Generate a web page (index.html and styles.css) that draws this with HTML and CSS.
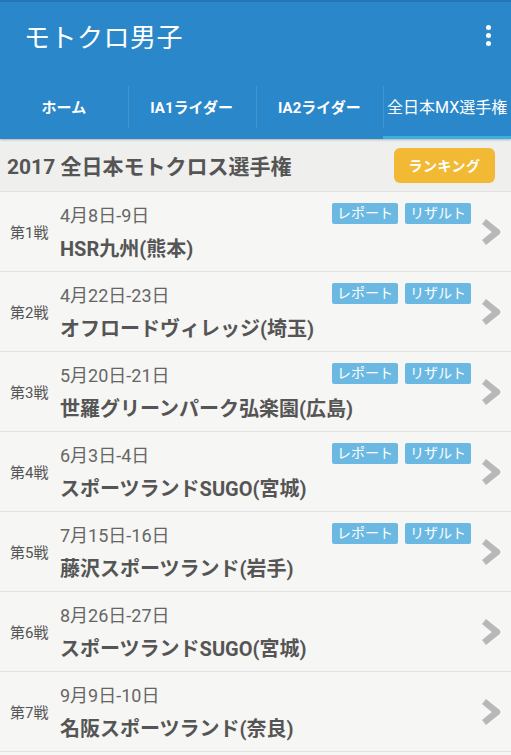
FILE: index.html
```html
<!DOCTYPE html>
<html lang="ja">
<head>
<meta charset="UTF-8">
<meta name="viewport" content="width=device-width, initial-scale=1.0">
<title>モトクロ男子</title>
<link rel="stylesheet" href="styles.css">
</head>
<body>
    <div class="app-header">
        <div class="toolbar">
            <h1 class="app-title">モトクロ男子</h1>
            <span class="menu-btn"><i></i><i></i><i></i></span>
        </div>
        <div class="tabs">
            <div class="tab">ホーム</div>
            <div class="tab">IA1ライダー</div>
            <div class="tab">IA2ライダー</div>
            <div class="tab active">全日本MX選手権</div>
        </div>
    </div>

    <div class="section-head">
        <h2>2017 全日本モトクロス選手権</h2>
        <span class="ranking-btn">ランキング</span>
    </div>

    <div class="race-list" id="raceList"></div>

    <script>
        const races = [
            { round: '第1戦', date: '4月8日-9日', place: 'HSR九州(熊本)', done: true },
            { round: '第2戦', date: '4月22日-23日', place: 'オフロードヴィレッジ(埼玉)', done: true },
            { round: '第3戦', date: '5月20日-21日', place: '世羅グリーンパーク弘楽園(広島)', done: true },
            { round: '第4戦', date: '6月3日-4日', place: 'スポーツランドSUGO(宮城)', done: true },
            { round: '第5戦', date: '7月15日-16日', place: '藤沢スポーツランド(岩手)', done: true },
            { round: '第6戦', date: '8月26日-27日', place: 'スポーツランドSUGO(宮城)', done: false },
            { round: '第7戦', date: '9月9日-10日', place: '名阪スポーツランド(奈良)', done: false }
        ];

        const list = document.getElementById('raceList');

        races.forEach(race => {
            const row = document.createElement('div');
            row.classList.add('race-row');

            const badges = race.done
                ? '<span class="badge">レポート</span><span class="badge">リザルト</span>'
                : '';

            row.innerHTML =
                '<div class="round">' + race.round + '</div>' +
                '<div class="race-info">' +
                    '<div class="race-top"><span class="race-date">' + race.date + '</span>' +
                    '<span class="badges">' + badges + '</span></div>' +
                    '<div class="race-place">' + race.place + '</div>' +
                '</div>' +
                '<svg class="chevron" width="22" height="28" viewBox="0 0 22 28">' +
                '<path d="M4 3.5 L17 14 L4 24.5" fill="none" stroke="#b8b8b8" stroke-width="6.5" stroke-linejoin="round"/></svg>';

            list.appendChild(row);
        });
    </script>
</body>
</html>
```

FILE: styles.css
```css
body {
    margin: 0;
    padding: 0;
    font-family: Roboto, "Noto Sans CJK JP", sans-serif;
    background-color: #f6f6f4;
    overflow: hidden;
}

.app-header {
    background-color: #2a87ca;
    border-top: 2px solid #2376b6;
    color: #fff;
    position: relative;
    z-index: 2;
    box-shadow: 0 1px 2px rgba(0, 0, 0, 0.25);
}

.toolbar {
    height: 66px;
    padding: 0 24px 8px;
    display: flex;
    align-items: center;
    justify-content: space-between;
}

.app-title {
    margin: 0;
    font-size: 26px;
    font-weight: normal;
    letter-spacing: 0.5px;
}

.menu-btn {
    display: flex;
    flex-direction: column;
    gap: 3px;
    margin-right: -4px;
}

.menu-btn i {
    display: block;
    width: 5px;
    height: 5px;
    border-radius: 50%;
    background-color: #fff;
}

.tabs {
    display: flex;
    height: 63px;
}

.tab {
    flex: 1;
    display: flex;
    align-items: center;
    justify-content: center;
    font-size: 15px;
    font-weight: bold;
    position: relative;
    border-bottom: 3px solid transparent;
    white-space: nowrap;
}

.tab + .tab::before {
    content: "";
    position: absolute;
    left: 0;
    top: 10px;
    bottom: 8px;
    width: 1px;
    background-color: rgba(255, 255, 255, 0.12);
}

.tab.active {
    border-bottom-color: #3bb1e2;
    font-weight: normal;
    font-size: 16px;
}

.section-head {
    height: 52px;
    display: flex;
    align-items: center;
    justify-content: space-between;
    padding: 0 16px 0 7px;
    background-color: #efefee;
    border-bottom: 1px solid #e2e2e2;
}

.section-head h2 {
    margin: 0;
    font-size: 21px;
    color: #555;
}

.ranking-btn {
    background-color: #f2b934;
    color: #fff;
    font-size: 14px;
    font-weight: bold;
    border-radius: 6px;
    width: 101px;
    height: 35px;
    display: flex;
    align-items: center;
    justify-content: center;
    letter-spacing: 0.5px;
}

.race-row {
    height: 79px;
    border-bottom: 1px solid #e2e2e2;
    display: flex;
    align-items: center;
    padding: 0 9px 0 10px;
}

.round {
    width: 50px;
    font-size: 15px;
    color: #555;
    padding-bottom: 1px;
}

.race-info {
    flex: 1;
    align-self: flex-start;
    padding-top: 10px;
    padding-right: 9px;
}

.race-top {
    display: flex;
    justify-content: space-between;
    align-items: flex-start;
    height: 26px;
}

.race-date {
    font-size: 18px;
    color: #666;
    line-height: 28px;
}

.badges {
    display: flex;
    gap: 7px;
    padding-top: 1px;
}

.badge {
    background-color: #6bb9e2;
    color: #fff;
    font-size: 14px;
    line-height: 21px;
    width: 66px;
    text-align: center;
    border-radius: 2px;
}

.race-place {
    margin-top: 5px;
    font-size: 20px;
    font-weight: bold;
    color: #555;
    line-height: 32px;
}

.chevron {
    display: block;
}
```
